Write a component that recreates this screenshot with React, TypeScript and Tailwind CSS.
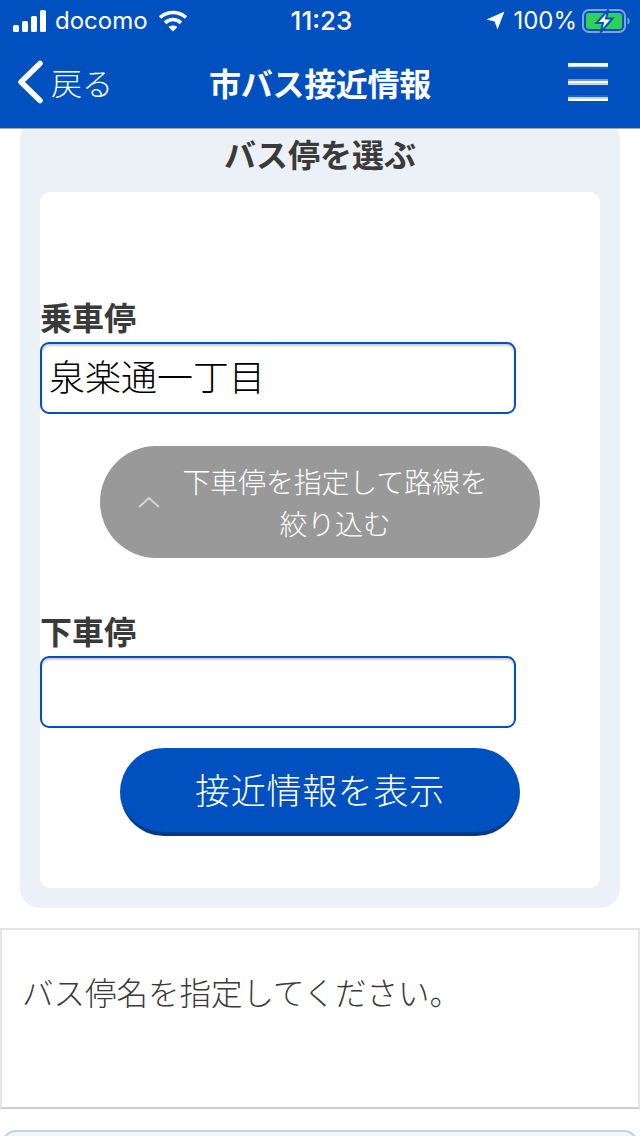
import React from 'react';

const jp = "font-['Noto_Sans_CJK_JP','Noto_Sans',sans-serif]";

const StatusBar: React.FC = () => (
  <div className="flex h-10 items-center justify-between pl-[13px] pr-[10px] pt-[1px] text-white">
    <div className="flex w-[200px] items-center">
      <svg width="34" height="22" viewBox="0 0 34 22" fill="white">
        <rect x="0" y="15" width="6" height="7" rx="1.5" />
        <rect x="9" y="11" width="6" height="11" rx="1.5" />
        <rect x="18" y="6" width="6" height="16" rx="1.5" />
        <rect x="27" y="0" width="6" height="22" rx="1.5" />
      </svg>
      <span className="ml-[8px] font-['Inter',sans-serif] text-[24px] leading-none">docomo</span>
      <svg className="ml-[10px]" width="30" height="22" viewBox="0 0 30 22" fill="none" stroke="white" strokeWidth="3.6">
        <path d="M2 7.5C9.6 0.8 20.4 0.8 28 7.5" />
        <path d="M7 12.8C11.9 8.6 18.1 8.6 23 12.8" />
        <path d="M15 21.5L10.6 17C13 15 17 15 19.4 17Z" fill="white" stroke="none" />
      </svg>
    </div>
    <span className="font-['Inter',sans-serif] text-[26px] font-medium leading-none">11:23</span>
    <div className="flex w-[200px] items-center justify-end">
      <svg width="19" height="19" viewBox="0 0 19 19" fill="white">
        <path d="M18.5 0.5L11.5 18.5L8.6 10.4L0.5 8.4Z" />
      </svg>
      <span className="ml-[8px] font-['Inter',sans-serif] text-[24px] leading-none">100%</span>
      <svg className="ml-[5px]" width="48" height="24" viewBox="0 0 48 24" fill="none">
        <rect x="1" y="1" width="42" height="22" rx="6" stroke="#7fa4dd" strokeWidth="2" />
        <rect x="4" y="4" width="36" height="16" rx="3" fill="#30d158" />
        <path d="M45.5 8.5C47 9 47.5 10.5 47.5 12C47.5 13.5 47 15 45.5 15.5Z" fill="#7fa4dd" />
        <path d="M26.5 0.5L14.5 14H21L18.5 23.5L30.5 9.5H24Z" fill="white" stroke="#0050c0" strokeWidth="2" />
      </svg>
    </div>
  </div>
);

const NavBar: React.FC = () => (
  <div className="flex h-[88px] items-center justify-between pb-[5px] pl-[17px] pr-[32px] text-white">
    <div className="flex w-[190px] shrink-0 items-center">
      <svg width="27" height="44" viewBox="0 0 27 44" fill="none" stroke="white" strokeWidth="5.5" strokeLinecap="round" strokeLinejoin="round">
        <path d="M23 3.5L4 22L23 40.5" />
      </svg>
      <span className="ml-[7px] text-[31px] font-light leading-none">戻る</span>
    </div>
    <span className="shrink-0 whitespace-nowrap text-[32px] font-bold leading-none tracking-[-0.3px]">市バス接近情報</span>
    <div className="flex w-[175px] shrink-0 justify-end">
      <div className="flex w-10 flex-col gap-[10px]">
        <div className="h-[6px] bg-[linear-gradient(#ffffff_0_3px,#c5d8f0_3px_4px,#1e62c8_4px_6px)]" />
        <div className="h-[6px] bg-[linear-gradient(#6f9ae0_0_2px,#ffffff_2px_4px,#c5d8f0_4px_6px)]" />
        <div className="h-[6px] bg-[linear-gradient(#1e62c8_0_2px,#c5d8f0_2px_4px,#ffffff_4px_6px)]" />
      </div>
    </div>
  </div>
);

const StopField: React.FC<{ label: string; value?: string; className?: string }> = ({ label, value, className }) => (
  <div className={className}>
    <div className="text-[32px] font-bold leading-[40px] text-[#3a3a3a]">{label}</div>
    <div className="mt-[6px] flex h-[72px] w-[476px] items-center rounded-[9px] border-2 border-[#0050c0] bg-white pb-[6px] pl-[7px] text-[36px] font-light leading-none text-black shadow-[inset_0_2px_2px_rgba(0,0,0,0.2)]">
      {value}
    </div>
  </div>
);

export default function App() {
  return (
    <div className={`${jp} h-[1136px] w-[640px] overflow-hidden bg-white`}>
      <div className="relative z-10 h-[129px] border-b border-[#a3a8b0] bg-[#0050c0]">
        <StatusBar />
        <NavBar />
      </div>

      <div className="mx-5 -mt-[9px] rounded-[20px] bg-[#ecf1f8] px-5 pb-5">
        <div className="flex h-[72px] items-end justify-center pb-[23px] text-[32px] font-bold leading-none text-[#3a3a3a]">
          バス停を選ぶ
        </div>
        <div className="h-[696px] rounded-[10px] bg-white pt-[104px]">
          <StopField label="乗車停" value="泉楽通一丁目" />

          <div className="ml-[60px] mt-[32px] flex h-[112px] w-[440px] items-center rounded-[56px] bg-[#999999] pl-[38px] pr-[50px] text-white">
            <svg className="shrink-0" width="22" height="12" viewBox="0 0 22 12" fill="none" stroke="#d6d6d6" strokeWidth="2">
              <path d="M1 11L11 2L21 11" />
            </svg>
            <div className="ml-[20px] flex-1 text-center text-[28px] font-light leading-[42px] tracking-[-0.2px]">
              下車停を指定して路線を
              <br />
              絞り込む
            </div>
          </div>

          <StopField label="下車停" className="mt-[52px]" />

          <div className="ml-[80px] mt-[20px] flex h-[88px] w-[400px] items-center justify-center rounded-[44px] border-b-4 border-[#003a8c] bg-[#0050c0] pb-[4px] text-[35px] font-light leading-none tracking-[0.7px] text-white">
            接近情報を表示
          </div>
        </div>
      </div>

      <div className="mt-[20px] flex h-[181px] items-start border-2 border-x-[#e5e5e5] border-b-[#cccccc] border-t-[#e5e5e5] pl-[20px] pt-[39px] text-[31.5px] font-light leading-[44px] text-[#3a3a3a]">
        バス停名を指定してください。
      </div>

      <div className="mx-[2px] mt-[21px] h-[40px] rounded-t-[14px] border-2 border-[#c3d3ea] bg-[#f3f6fb]" />
    </div>
  );
}
